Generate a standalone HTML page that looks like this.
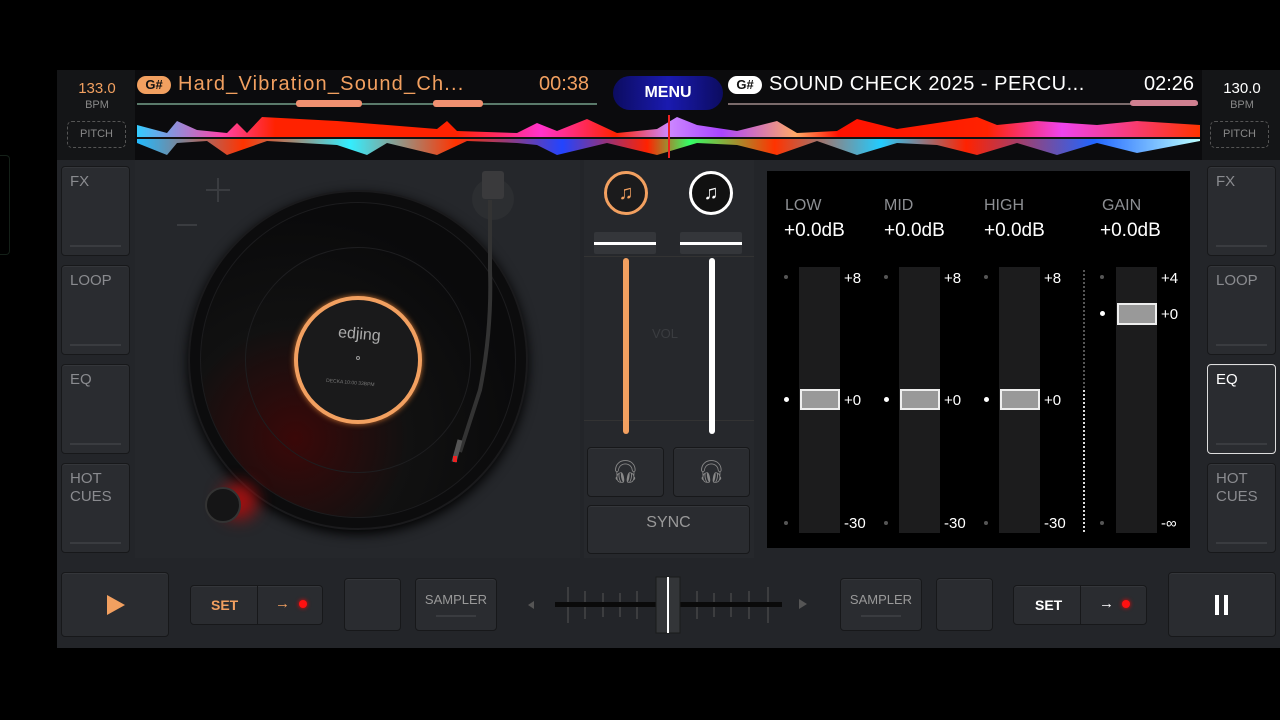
<!DOCTYPE html>
<html><head><meta charset="utf-8"><style>
*{margin:0;padding:0;box-sizing:border-box}
body{width:1280px;height:720px;background:#000;position:relative;overflow:hidden;font-family:"Liberation Sans",sans-serif;color:#888}
.a{position:absolute}
.btn{position:absolute;background:#2a2c30;border:1px solid #17181a;border-radius:4px;box-shadow:inset 0 1px 0 #34363a}
.side{font-size:15px;color:#8a8b8f;padding:6px 8px;line-height:18px}
.side::after{content:"";position:absolute;left:8px;right:8px;bottom:8px;height:2px;background:#3a3c40}
.t{font-size:16px;color:#8d8f93}
.w{color:#fff}
</style></head><body>
<div class="a" style="left:0;top:155px;width:10px;height:100px;border:1px solid #142018;border-left:none;border-radius:0 4px 4px 0"></div>
<div class="a" style="left:57px;top:70px;width:1223px;height:578px;background:#232529"></div>
<div class="a" style="left:57px;top:70px;width:1223px;height:90px;background:#0b0b0d"></div>
<div class="a" style="left:57px;top:70px;width:78px;height:90px;background:#141517"></div>
<div class="a" style="left:1202px;top:70px;width:78px;height:90px;background:#141517"></div>
<div class="a" style="left:62px;top:80px;width:70px;text-align:center;color:#f2a060;font-size:15px">133.0</div>
<div class="a" style="left:62px;top:99px;width:70px;text-align:center;font-size:11px;color:#888">BPM</div>
<div class="a" style="left:67px;top:121px;width:59px;height:27px;border:1px dashed #555;border-radius:5px;text-align:center;line-height:25px;font-size:11px;color:#888">PITCH</div>
<div class="a" style="left:1207px;top:80px;width:70px;text-align:center;color:#fff;font-size:15px">130.0</div>
<div class="a" style="left:1207px;top:99px;width:70px;text-align:center;font-size:11px;color:#888">BPM</div>
<div class="a" style="left:1210px;top:121px;width:59px;height:27px;border:1px dashed #555;border-radius:5px;text-align:center;line-height:25px;font-size:11px;color:#888">PITCH</div>
<div class="a" style="left:137px;top:76px;width:34px;height:18px;border-radius:9px;background:#f2a060;color:#111;font-size:13px;font-weight:bold;text-align:center;line-height:18px">G#</div>
<div class="a" style="left:178px;top:73px;font-size:20px;color:#f2a060;letter-spacing:1.2px">Hard_Vibration_Sound_Ch...</div>
<div class="a" style="left:539px;top:73px;font-size:20px;color:#f2a060">00:38</div>
<div class="a" style="left:613px;top:76px;width:110px;height:34px;border-radius:17px;background:linear-gradient(90deg,#0c0c60,#1a1ab0,#0c0c60);color:#fff;font-weight:bold;font-size:16px;text-align:center;line-height:34px">MENU</div>
<div class="a" style="left:728px;top:76px;width:34px;height:18px;border-radius:9px;background:#fff;color:#111;font-size:13px;font-weight:bold;text-align:center;line-height:18px">G#</div>
<div class="a" style="left:769px;top:73px;font-size:20px;color:#fff;letter-spacing:0.5px">SOUND CHECK 2025 - PERCU...</div>
<div class="a" style="left:1144px;top:73px;font-size:20px;color:#fff">02:26</div>
<div class="a" style="left:137px;top:103px;width:460px;height:2px;background:#5a7a6a"></div>
<div class="a" style="left:296px;top:100px;width:66px;height:7px;background:#f09070;border-radius:3px"></div>
<div class="a" style="left:433px;top:100px;width:50px;height:7px;background:#f09070;border-radius:3px"></div>
<div class="a" style="left:728px;top:103px;width:470px;height:2px;background:#7a6a6a"></div>
<div class="a" style="left:1130px;top:100px;width:68px;height:6px;background:#d08090;border-radius:3px"></div>
<svg class="a" style="left:137px;top:115px" width="1063" height="43">
<defs><linearGradient id="g1" x1="0" x2="1"><stop offset="0" stop-color="#3cf"/><stop offset=".08" stop-color="#f4a"/><stop offset=".13" stop-color="#f20"/><stop offset=".3" stop-color="#f20"/><stop offset=".38" stop-color="#f3c"/><stop offset=".45" stop-color="#f20"/><stop offset=".5" stop-color="#c8f"/><stop offset=".55" stop-color="#a4f"/><stop offset=".62" stop-color="#fa6"/><stop offset=".66" stop-color="#f10"/><stop offset=".8" stop-color="#f20"/><stop offset=".87" stop-color="#e4e"/><stop offset="1" stop-color="#f30"/></linearGradient>
<linearGradient id="g2" x1="0" x2="1"><stop offset="0" stop-color="#2bf"/><stop offset=".1" stop-color="#f30"/><stop offset=".2" stop-color="#3ef"/><stop offset=".3" stop-color="#f30"/><stop offset=".4" stop-color="#24f"/><stop offset=".48" stop-color="#f20"/><stop offset=".52" stop-color="#3f6"/><stop offset=".6" stop-color="#f30"/><stop offset=".7" stop-color="#2cf"/><stop offset=".78" stop-color="#f20"/><stop offset=".9" stop-color="#26f"/><stop offset="1" stop-color="#bff"/></linearGradient></defs>
<path d="M0 22 L0 10 L30 18 L40 6 L60 15 L90 18 L100 8 L110 18 L125 2 L200 6 L300 14 L310 6 L320 16 L380 18 L400 8 L420 16 L450 4 L480 18 L520 14 L540 2 L560 10 L600 16 L640 6 L660 18 L700 16 L720 4 L760 14 L800 8 L840 2 L860 10 L900 6 L960 10 L1000 6 L1063 10 L1063 22 Z" fill="url(#g1)"/>
<rect x="0" y="22" width="1063" height="2" fill="#111"/>
<path d="M0 24 L0 28 L30 40 L40 28 L70 26 L90 40 L130 26 L200 30 L230 40 L250 28 L300 40 L330 26 L380 28 L400 30 L420 40 L470 28 L520 40 L560 28 L600 30 L640 40 L680 26 L720 40 L760 28 L800 30 L840 40 L880 28 L920 40 L960 28 L1000 38 L1063 26 L1063 24 Z" fill="url(#g2)"/>
<rect x="531" y="0" width="2" height="43" fill="#e22"/>
</svg>
<div class="btn side" style="left:61px;top:166px;width:69px;height:90px">FX</div>
<div class="btn side" style="left:61px;top:265px;width:69px;height:90px">LOOP</div>
<div class="btn side" style="left:61px;top:364px;width:69px;height:90px">EQ</div>
<div class="btn side" style="left:61px;top:463px;width:69px;height:90px">HOT<br>CUES</div>
<div class="btn side" style="left:1207px;top:166px;width:69px;height:90px">FX</div>
<div class="btn side" style="left:1207px;top:265px;width:69px;height:90px">LOOP</div>
<div class="btn side" style="left:1207px;top:364px;width:69px;height:90px;border:1.5px solid #ddd;color:#fff">EQ</div>
<div class="btn side" style="left:1207px;top:463px;width:69px;height:90px">HOT<br>CUES</div>
<div class="a" style="left:135px;top:160px;width:445px;height:398px;background:#25272b"></div>
<div class="a" style="left:206px;top:189px;width:24px;height:2px;background:#3a3c40"></div>
<div class="a" style="left:217px;top:178px;width:2px;height:24px;background:#3a3c40"></div>
<div class="a" style="left:177px;top:224px;width:20px;height:2px;background:#3a3c40"></div>
<div class="a" style="left:188px;top:190px;width:340px;height:340px;border-radius:50%;background:#0c0c0d;box-shadow:0 4px 12px #000;border:2px solid #1a1a1c"></div>
<div class="a" style="left:200px;top:202px;width:316px;height:316px;border-radius:50%;background:radial-gradient(circle at 30% 75%,#3a0808 0,#111 35%,#0a0a0b 70%);border:1px solid #1c1c1e"></div>
<div class="a" style="left:245px;top:247px;width:226px;height:226px;border-radius:50%;border:1px solid #1e1e20"></div>
<div class="a" style="left:294px;top:296px;width:128px;height:128px;border-radius:50%;border:4px solid #f2a060;background:#1a1a1b;box-shadow:0 0 6px #c77030"></div>
<div class="a" style="left:338px;top:326px;font-size:16px;color:#aaa;transform:rotate(5deg)">edjing</div>
<div class="a" style="left:356px;top:356px;width:4px;height:4px;border-radius:50%;border:1px solid #999"></div>
<div class="a" style="left:326px;top:380px;font-size:5px;color:#777;transform:rotate(5deg)">DECKA 10:00 33BPM</div>
<div class="a" style="left:205px;top:487px;width:36px;height:36px;border-radius:50%;background:#151516;border:2px solid #333;box-shadow:16px -4px 16px #a01010"></div>
<div class="a" style="left:472px;top:178px;width:42px;height:42px;border-radius:50%;background:#2c2e31"></div>
<div class="a" style="left:482px;top:171px;width:22px;height:28px;background:#3a3a3c;border-radius:3px"></div>
<svg class="a" style="left:440px;top:190px" width="70" height="280"><path d="M50 10 L50 80 Q52 140 40 200 L20 262" stroke="#333" stroke-width="4" fill="none"/><path d="M20 250 L14 272" stroke="#555" stroke-width="5"/><rect x="13" y="266" width="4" height="6" fill="#e22"/></svg>
<div class="a" style="left:584px;top:160px;width:170px;height:398px;background:#26282c"></div>
<div class="a" style="left:604px;top:171px;width:44px;height:44px;border-radius:50%;border:3px solid #f2a060;background:#1b1b1c;color:#f2a060;font-size:20px;text-align:center;line-height:38px">♫</div>
<div class="a" style="left:689px;top:171px;width:44px;height:44px;border-radius:50%;border:3px solid #fff;background:#111;color:#fff;font-size:20px;text-align:center;line-height:38px">♫</div>
<div class="a" style="left:584px;top:256px;width:170px;height:1px;background:#333"></div>
<div class="a" style="left:584px;top:420px;width:170px;height:1px;background:#333"></div>
<div class="a" style="left:652px;top:326px;font-size:13px;color:#3a3c40">VOL</div>
<div class="a" style="left:594px;top:232px;width:62px;height:22px;background:#34363a;border-radius:2px"></div>
<div class="a" style="left:594px;top:242px;width:62px;height:3px;background:#fff"></div>
<div class="a" style="left:680px;top:232px;width:62px;height:22px;background:#34363a;border-radius:2px"></div>
<div class="a" style="left:680px;top:242px;width:62px;height:3px;background:#fff"></div>
<div class="a" style="left:623px;top:258px;width:6px;height:176px;background:#f2a060;border-radius:3px"></div>
<div class="a" style="left:709px;top:258px;width:6px;height:176px;background:#fff;border-radius:3px"></div>
<div class="btn" style="left:587px;top:447px;width:77px;height:50px;color:#888;font-size:22px;text-align:center;line-height:48px">🎧︎</div>
<div class="btn" style="left:673px;top:447px;width:77px;height:50px;color:#888;font-size:22px;text-align:center;line-height:48px">🎧︎</div>
<div class="btn" style="left:587px;top:505px;width:163px;height:49px;text-align:center;font-size:16px;color:#999;line-height:34px">SYNC</div>
<div class="a" style="left:767px;top:171px;width:423px;height:377px;background:#000"></div>
<div class="a t" style="left:785px;top:197px">LOW</div>
<div class="a t" style="left:884px;top:197px">MID</div>
<div class="a t" style="left:984px;top:197px">HIGH</div>
<div class="a t" style="left:1102px;top:197px">GAIN</div>
<div class="a w" style="left:784px;top:220px;font-size:19px">+0.0dB</div>
<div class="a w" style="left:884px;top:220px;font-size:19px">+0.0dB</div>
<div class="a w" style="left:984px;top:220px;font-size:19px">+0.0dB</div>
<div class="a w" style="left:1100px;top:220px;font-size:19px">+0.0dB</div>
<div class="a" style="left:799px;top:267px;width:41px;height:266px;background:#1c1c1d"></div>
<div class="a" style="left:899px;top:267px;width:41px;height:266px;background:#1c1c1d"></div>
<div class="a" style="left:999px;top:267px;width:41px;height:266px;background:#1c1c1d"></div>
<div class="a" style="left:1116px;top:267px;width:41px;height:266px;background:#1c1c1d"></div>
<div class="a" style="left:800px;top:389px;width:40px;height:21px;background:#999;border:2px solid #eee"></div>
<div class="a" style="left:900px;top:389px;width:40px;height:21px;background:#999;border:2px solid #eee"></div>
<div class="a" style="left:1000px;top:389px;width:40px;height:21px;background:#999;border:2px solid #eee"></div>
<div class="a" style="left:1117px;top:303px;width:40px;height:22px;background:#999;border:2px solid #eee"></div>
<div class="a" style="left:1083px;top:270px;width:0;height:262px;border-left:2px dotted #555"></div>
<div class="a" style="left:1083px;top:390px;width:0;height:142px;border-left:2px dotted #ddd"></div>
<div class="a" style="color:#fff;font-size:15px;left:844px;top:270px">+8</div>
<div class="a" style="color:#fff;font-size:15px;left:944px;top:270px">+8</div>
<div class="a" style="color:#fff;font-size:15px;left:1044px;top:270px">+8</div>
<div class="a" style="color:#fff;font-size:15px;left:1161px;top:270px">+4</div>
<div class="a" style="color:#fff;font-size:15px;left:844px;top:392px">+0</div>
<div class="a" style="color:#fff;font-size:15px;left:944px;top:392px">+0</div>
<div class="a" style="color:#fff;font-size:15px;left:1044px;top:392px">+0</div>
<div class="a" style="color:#fff;font-size:15px;left:1161px;top:306px">+0</div>
<div class="a" style="color:#fff;font-size:15px;left:844px;top:515px">-30</div>
<div class="a" style="color:#fff;font-size:15px;left:944px;top:515px">-30</div>
<div class="a" style="color:#fff;font-size:15px;left:1044px;top:515px">-30</div>
<div class="a" style="color:#fff;font-size:15px;left:1161px;top:515px">-∞</div>
<div class="a" style="left:784px;top:275px;width:4px;height:4px;border-radius:50%;background:#555;box-shadow:100px 0 #555,200px 0 #555,316px 0 #555,0 246px #555,100px 246px #555,200px 246px #555,316px 246px #555"></div>
<div class="a" style="left:784px;top:397px;width:5px;height:5px;border-radius:50%;background:#fff;box-shadow:100px 0 #fff,200px 0 #fff,316px -86px #fff"></div>
<div class="a" style="left:57px;top:558px;width:1223px;height:90px;background:#232529"></div>
<div class="btn" style="left:61px;top:572px;width:108px;height:65px"></div>
<svg class="a" style="left:106px;top:594px" width="20" height="22"><path d="M1 1 L19 11 L1 21Z" fill="#f2a060"/></svg>
<div class="btn" style="left:190px;top:585px;width:133px;height:40px"></div>
<div class="a" style="left:257px;top:586px;width:1px;height:38px;background:#17181a"></div>
<div class="a" style="left:211px;top:597px;font-size:14px;font-weight:bold;color:#f2a060">SET</div>
<div class="a" style="left:275px;top:595px;font-size:15px;color:#f2a060">→</div>
<div class="a" style="left:299px;top:600px;width:8px;height:8px;border-radius:50%;background:#f11;box-shadow:0 0 4px #f00"></div>
<div class="btn" style="left:344px;top:578px;width:57px;height:53px"></div>
<div class="btn" style="left:415px;top:578px;width:82px;height:53px;text-align:center;font-size:13px;color:#999;padding-top:13px">SAMPLER<div style="margin:8px auto 0;width:40px;height:2px;background:#3a3c40"></div></div>
<div class="btn" style="left:840px;top:578px;width:82px;height:53px;text-align:center;font-size:13px;color:#999;padding-top:13px">SAMPLER<div style="margin:8px auto 0;width:40px;height:2px;background:#3a3c40"></div></div>
<div class="btn" style="left:936px;top:578px;width:57px;height:53px"></div>
<div class="btn" style="left:1013px;top:585px;width:134px;height:40px"></div>
<div class="a" style="left:1080px;top:586px;width:1px;height:38px;background:#17181a"></div>
<div class="a" style="left:1035px;top:597px;font-size:14px;font-weight:bold;color:#fff">SET</div>
<div class="a" style="left:1099px;top:595px;font-size:15px;color:#fff">→</div>
<div class="a" style="left:1122px;top:600px;width:8px;height:8px;border-radius:50%;background:#f11;box-shadow:0 0 4px #f00"></div>
<div class="btn" style="left:1168px;top:572px;width:108px;height:65px"></div>
<div class="a" style="left:1215px;top:595px;width:4px;height:20px;background:#fff;box-shadow:9px 0 #fff"></div>
<svg class="a" style="left:525px;top:575px" width="290" height="60">
<path d="M9 34 L3 30 L9 26Z" fill="#555"/>
<path d="M274 24 L282 29 L274 34Z" fill="#555"/>
<g stroke="#555" stroke-width="1"><line x1="43" y1="12" x2="43" y2="48"/><line x1="60" y1="16" x2="60" y2="44"/><line x1="78" y1="18" x2="78" y2="42"/><line x1="95" y1="18" x2="95" y2="42"/><line x1="112" y1="16" x2="112" y2="44"/><line x1="172" y1="16" x2="172" y2="44"/><line x1="189" y1="18" x2="189" y2="42"/><line x1="206" y1="18" x2="206" y2="42"/><line x1="224" y1="16" x2="224" y2="44"/><line x1="243" y1="12" x2="243" y2="48"/></g>
<rect x="30" y="27" width="227" height="5" fill="#0a0a0a"/>
<rect x="131" y="2" width="24" height="56" fill="#333538" stroke="#1a1a1a"/>
<rect x="142" y="2" width="2" height="56" fill="#fff"/>
</svg>
</body></html>
